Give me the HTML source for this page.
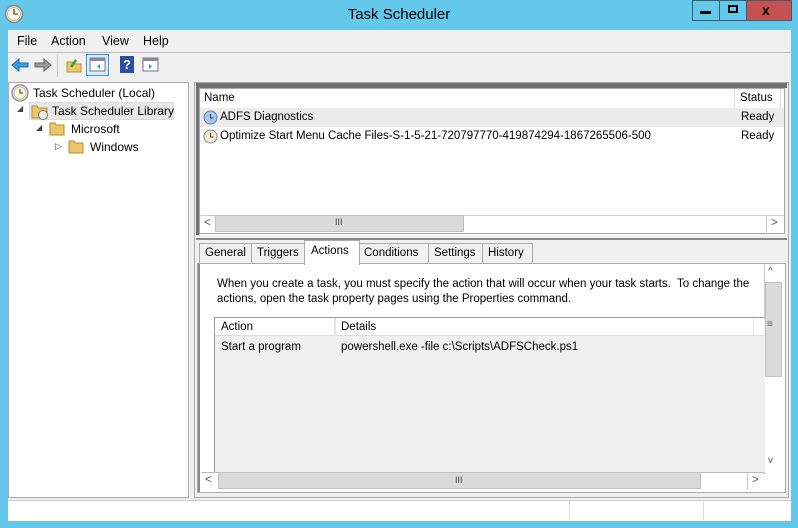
<!DOCTYPE html>
<html><head><style>
*{margin:0;padding:0;box-sizing:border-box}
body{width:798px;height:528px;background:#63c8ea;position:relative;overflow:hidden;font-family:"Liberation Sans",sans-serif;font-size:11.5px;color:#000}
.a{position:absolute}
.t{position:absolute;white-space:nowrap}
</style></head><body>
<svg class="a" style="left:4px;top:4px" width="20" height="20" viewBox="0 0 20 20"><circle cx="10" cy="10" r="8.5" fill="#eee" stroke="#888" stroke-width="1.5"/><circle cx="10" cy="10" r="6.5" fill="#fff8d8" stroke="#bbb"/><path d="M10 5v5h4" stroke="#555" stroke-width="1.3" fill="none"/></svg>
<div class="t" style="left:0;width:798px;text-align:center;top:6px;font-size:15px;color:#000">Task Scheduler</div>
<div class="a" style="left:692px;top:0;width:28px;height:21px;border:1px solid #3a5e6a;background:#63c8ea"></div>
<div class="a" style="left:700px;top:11px;width:11px;height:3px;background:#000"></div>
<div class="a" style="left:719px;top:0;width:28px;height:21px;border:1px solid #3a5e6a;background:#63c8ea"></div>
<div class="a" style="left:728px;top:5px;width:10px;height:8px;border:2px solid #000"></div>
<div class="a" style="left:746px;top:0;width:46px;height:21px;border:1px solid #3a5e6a;background:#c75050"></div>
<div class="t" style="left:762px;top:2px;font-size:14px;font-weight:bold">x</div>
<div class="a" style="left:8px;top:30px;width:783px;height:491px;background:#f0f0f0"></div>
<div class="t" style="left:17px;top:34px;font-size:12.5px">File</div>
<div class="t" style="left:51px;top:34px;font-size:12.5px">Action</div>
<div class="t" style="left:102px;top:34px;font-size:12.5px">View</div>
<div class="t" style="left:143px;top:34px;font-size:12.5px">Help</div>
<div class="a" style="left:8px;top:52px;width:783px;height:1px;background:#bbb"></div>
<svg class="a" style="left:11px;top:57px" width="18" height="16"><path d="M1 8l7-6v4h9v4H8v4z" fill="#3b9de0" stroke="#1a6fb0"/></svg>
<svg class="a" style="left:34px;top:57px" width="18" height="16"><path d="M17 8l-7-6v4H1v4h9v4z" fill="#999" stroke="#666"/></svg>
<div class="a" style="left:57px;top:55px;width:1px;height:22px;background:#ccc"></div>
<svg class="a" style="left:66px;top:57px" width="16" height="16"><path d="M1 5h5l1 2h8v8H1z" fill="#ecc66a" stroke="#b58f2c"/><path d="M5 10l5-7" stroke="#3aa02a" stroke-width="2.5"/></svg>
<div class="a" style="left:86px;top:54px;width:23px;height:22px;border:1px solid #3399dd;background:#d8ecf9"></div>
<svg class="a" style="left:89px;top:57px" width="17" height="16"><rect x="1" y="1" width="15" height="13" fill="#fff" stroke="#777"/><rect x="1" y="1" width="15" height="3" fill="#889"/><path d="M11 7v5l-3-2.5z" fill="#2a9"/></svg>
<div class="a" style="left:120px;top:56px;width:14px;height:17px;background:#2b4fa8;color:#fff;font-weight:bold;font-size:13px;text-align:center;line-height:17px">?</div>
<svg class="a" style="left:142px;top:57px" width="17" height="16"><rect x="1" y="1" width="15" height="13" fill="#fff" stroke="#777"/><rect x="1" y="1" width="15" height="3" fill="#889"/><path d="M7 7v5l3-2.5z" fill="#2a9"/></svg>
<div class="a" style="left:8px;top:82px;width:181px;height:416px;background:#fff;border:1px solid #aaa"></div>
<svg class="a" style="left:11px;top:84px" width="18" height="18"><circle cx="9" cy="9" r="8" fill="#eee" stroke="#888" stroke-width="1.3"/><circle cx="9" cy="9" r="6" fill="#fff8d8" stroke="#bbb"/><path d="M9 5v4h3" stroke="#555" stroke-width="1.2" fill="none"/></svg>
<div class="t" style="left:33px;top:86px;font-size:12px">Task Scheduler (Local)</div>
<div class="t" style="left:17px;top:104px;font-size:8px;color:#444">◢</div>
<div class="a" style="left:29px;top:102px;width:145px;height:18px;background:#e8e8e8;border:1px solid #dadada"></div>
<svg class="a" style="left:31px;top:103px" width="18" height="17"><path d="M1 3h5l1 2h9v10H1z" fill="#ecc66a" stroke="#b58f2c"/><circle cx="12" cy="12" r="4.5" fill="#eee" stroke="#777"/></svg>
<div class="t" style="left:52px;top:104px;font-size:12px">Task Scheduler Library</div>
<div class="t" style="left:36px;top:123px;font-size:8px;color:#444">◢</div>
<svg class="a" style="left:49px;top:121px" width="16" height="15"><path d="M1 2h5l1 2h8v10H1z" fill="#ecc66a" stroke="#b58f2c"/></svg>
<div class="t" style="left:71px;top:122px;font-size:12px">Microsoft</div>
<div class="t" style="left:55px;top:141px;font-size:9px;color:#444">▷</div>
<svg class="a" style="left:68px;top:139px" width="16" height="15"><path d="M1 2h5l1 2h8v10H1z" fill="#ecc66a" stroke="#b58f2c"/></svg>
<div class="t" style="left:90px;top:140px;font-size:12px">Windows</div>
<div class="a" style="left:194px;top:82px;width:595px;height:416px;border:1px solid #aaa;background:#f0f0f0"></div>
<div class="a" style="left:196px;top:83px;width:591px;height:5px;background:#707070"></div>
<div class="a" style="left:196px;top:83px;width:3px;height:152px;background:#707070"></div>
<div class="a" style="left:199px;top:88px;width:586px;height:146px;background:#fff;border:1px solid #aaa"></div>
<div class="a" style="left:734px;top:89px;width:1px;height:19px;background:#ddd"></div>
<div class="a" style="left:780px;top:89px;width:1px;height:19px;background:#ddd"></div>
<div class="t" style="left:204px;top:92px">Name</div>
<div class="t" style="left:740px;top:92px">Status</div>
<div class="a" style="left:200px;top:108px;width:584px;height:19px;background:#ececec"></div>
<svg class="a" style="left:203px;top:110px" width="15" height="15"><circle cx="7.5" cy="7.5" r="6.5" fill="#a8c8ee" stroke="#5b7fb0"/><path d="M7.5 4v4h3" stroke="#333" fill="none"/></svg>
<div class="t" style="left:220px;top:111px">ADFS Diagnostics</div>
<div class="t" style="left:741px;top:111px">Ready</div>
<svg class="a" style="left:203px;top:129px" width="15" height="15"><circle cx="7.5" cy="7.5" r="6.5" fill="#f3ecd0" stroke="#888"/><path d="M7.5 4v4h3" stroke="#333" fill="none"/></svg>
<div class="t" style="left:220px;top:130px">Optimize Start Menu Cache Files-S-1-5-21-720797770-419874294-1867265506-500</div>
<div class="t" style="left:741px;top:130px">Ready</div>
<div class="a" style="left:200px;top:215px;width:584px;height:18px;background:#fff;border-top:1px solid #ccc"></div>
<div class="a" style="left:215px;top:215px;width:249px;height:17px;background:#dadada;border:1px solid #c0c0c0"></div>
<div class="t" style="left:204px;top:217px;color:#555">&lt;</div>
<div class="t" style="left:335px;top:217px;font-size:9px;color:#444">III</div>
<div class="a" style="left:766px;top:215px;width:1px;height:18px;background:#ccc"></div>
<div class="t" style="left:771px;top:217px;color:#555">&gt;</div>
<div class="a" style="left:196px;top:238px;width:591px;height:2px;background:#888"></div>
<div class="a" style="left:199px;top:243px;width:53px;height:21px;border:1px solid #aaa;background:#f0f0f0"></div>
<div class="t" style="left:205px;top:247px">General</div>
<div class="a" style="left:251px;top:243px;width:54px;height:21px;border:1px solid #aaa;background:#f0f0f0"></div>
<div class="t" style="left:257px;top:247px">Triggers</div>
<div class="a" style="left:359px;top:243px;width:70px;height:21px;border:1px solid #aaa;background:#f0f0f0"></div>
<div class="t" style="left:364px;top:247px">Conditions</div>
<div class="a" style="left:428px;top:243px;width:55px;height:21px;border:1px solid #aaa;background:#f0f0f0"></div>
<div class="t" style="left:434px;top:247px">Settings</div>
<div class="a" style="left:482px;top:243px;width:51px;height:21px;border:1px solid #aaa;background:#f0f0f0"></div>
<div class="t" style="left:488px;top:247px">History</div>
<div class="a" style="left:197px;top:263px;width:589px;height:230px;border:1px solid #aaa;background:#fff"></div>
<div class="a" style="left:304px;top:240px;width:56px;height:25px;border:1px solid #aaa;border-bottom:none;background:#fff"></div>
<div class="t" style="left:311px;top:245px">Actions</div>
<div class="a" style="left:198px;top:264px;width:2px;height:228px;background:#888"></div>
<div class="a" style="left:217px;top:276px;width:547px;height:36px;overflow:hidden">
<div class="t" style="left:0;top:2px">When you create a task, you must specify the action that will occur when your task starts.&nbsp; To change the</div>
<div class="t" style="left:0;top:17px">actions, open the task property pages using the Properties command.</div>
</div>
<div class="a" style="left:764px;top:265px;width:18px;height:208px;background:#fff;border-left:1px solid #ccc"></div>
<div class="a" style="left:765px;top:282px;width:17px;height:95px;background:#dadada;border:1px solid #c0c0c0"></div>
<div class="t" style="left:768px;top:266px;color:#555;font-size:10px">^</div>
<div class="t" style="left:767px;top:319px;color:#555;font-size:10px">≡</div>
<div class="t" style="left:768px;top:455px;color:#555;font-size:10px">v</div>
<div class="a" style="left:214px;top:317px;width:551px;height:157px;background:#f0f0f0;border:1px solid #999;border-right:none"></div>
<div class="a" style="left:215px;top:318px;width:549px;height:18px;background:#fff;border-bottom:1px solid #ddd"></div>
<div class="a" style="left:334px;top:318px;width:2px;height:18px;background:#e4e4e4"></div>
<div class="a" style="left:753px;top:318px;width:1px;height:18px;background:#e4e4e4"></div>
<div class="t" style="left:221px;top:321px">Action</div>
<div class="t" style="left:341px;top:321px">Details</div>
<div class="t" style="left:221px;top:341px">Start a program</div>
<div class="t" style="left:341px;top:341px">powershell.exe -file c:\Scripts\ADFSCheck.ps1</div>
<div class="a" style="left:201px;top:472px;width:563px;height:18px;background:#fff;border-top:1px solid #bbb"></div>
<div class="a" style="left:218px;top:472px;width:483px;height:17px;background:#dadada;border:1px solid #c0c0c0"></div>
<div class="t" style="left:205px;top:474px;color:#555">&lt;</div>
<div class="t" style="left:455px;top:475px;font-size:9px;color:#444">III</div>
<div class="a" style="left:747px;top:472px;width:1px;height:18px;background:#ccc"></div>
<div class="t" style="left:752px;top:474px;color:#555">&gt;</div>
<div class="a" style="left:8px;top:500px;width:783px;height:21px;background:#fff;border-top:1px solid #ccc"></div>
<div class="a" style="left:569px;top:501px;width:1px;height:19px;background:#ddd"></div>
<div class="a" style="left:703px;top:501px;width:1px;height:19px;background:#ddd"></div>
</body></html>
